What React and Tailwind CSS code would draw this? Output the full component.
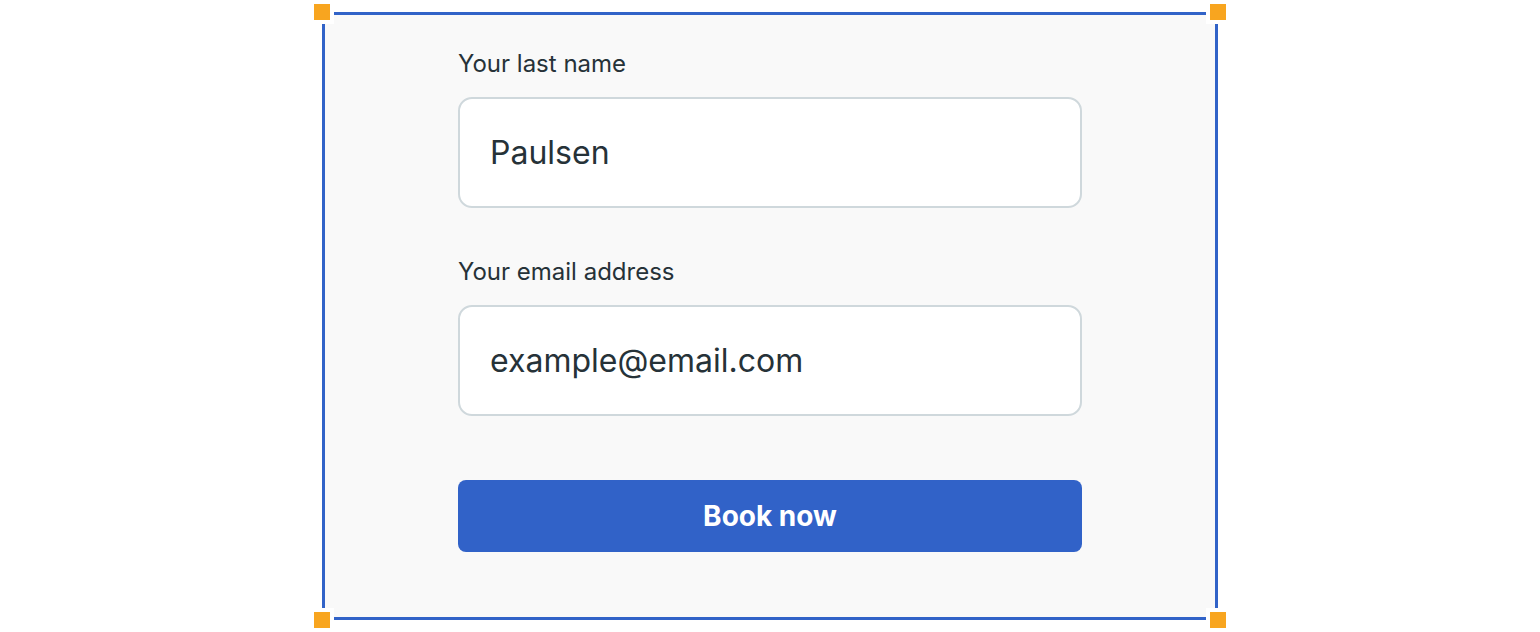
import React from 'react';

function Handle({ className }) {
  return (
    <span
      className={`absolute h-6 w-6 border-4 border-white bg-[#f8a51f] ${className}`}
    />
  );
}

function Field({ label, value, className = '' }) {
  return (
    <div className={`flex flex-col ${className}`}>
      <label className="pt-px text-[24px] leading-8 text-[#263238]">{label}</label>
      <div className="mt-[17px] flex h-[111px] items-center rounded-[14px] border-2 border-[#cfd8dc] bg-white px-[30px]">
        <span className="text-[32px] text-[#263238]">{value}</span>
      </div>
    </div>
  );
}

export default function App() {
  return (
    <div
      className="min-h-[632px] w-full bg-white pl-[322px] pt-[12px]"
      style={{ fontFamily: 'Inter, "Noto Sans", sans-serif' }}
    >
      <div className="relative h-[608px] w-[896px]">
        <div className="flex h-full flex-col border-[3px] border-[#3163c8] bg-[#f9f9f9] px-[133px] pt-[32px]">
          <Field label="Your last name" value="Paulsen" />
          <Field label="Your email address" value="example@email.com" className="mt-[47px]" />
          <button className="mt-[64px] flex h-[72px] items-center justify-center rounded-lg bg-[#3162c8] text-[28px] font-bold text-white">
            Book now
          </button>
        </div>

        {/* selection handles */}
        <Handle className="-left-3 -top-3" />
        <Handle className="-right-3 -top-3" />
        <Handle className="-bottom-3 -left-3" />
        <Handle className="-bottom-3 -right-3" />
      </div>
    </div>
  );
}
